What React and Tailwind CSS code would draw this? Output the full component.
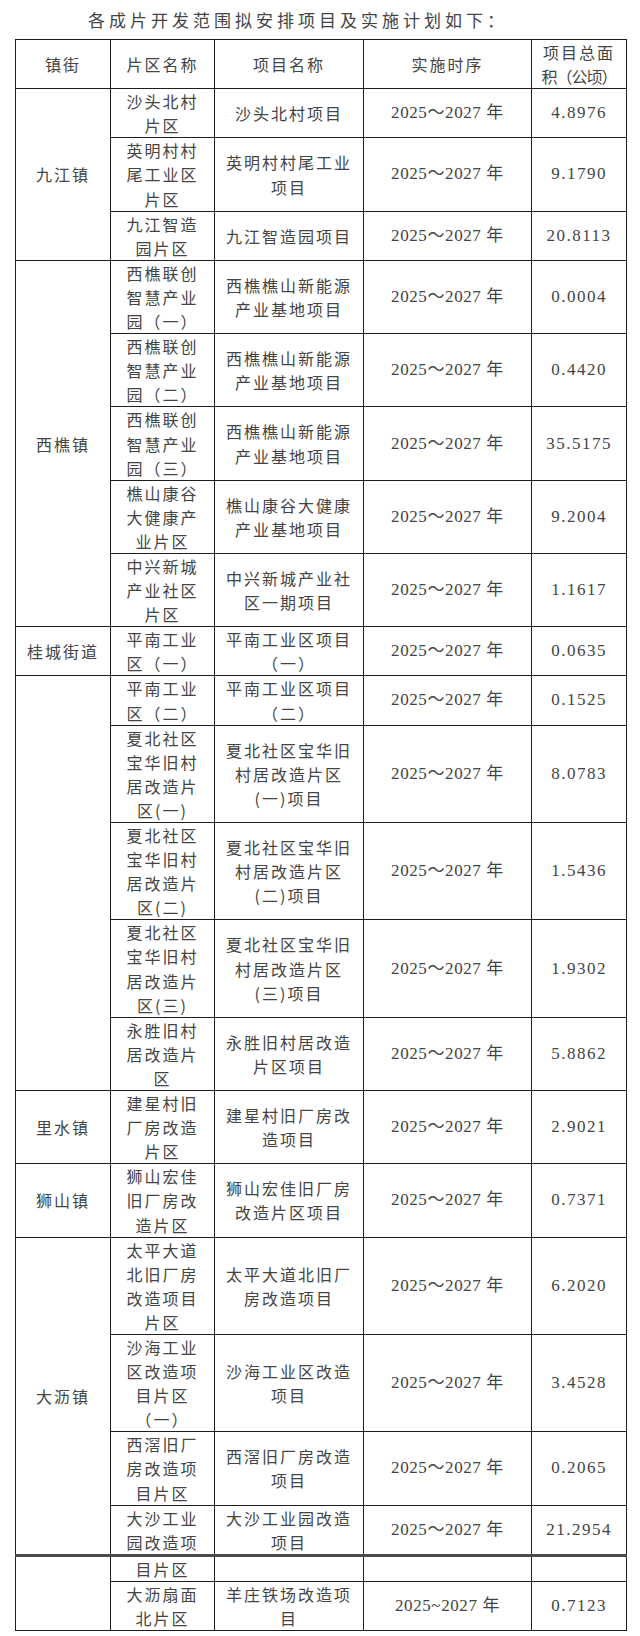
import React from 'react';

const T = '2025～2027 年';

const groups = [
  {
    town: '九江镇',
    rows: [
      { zone: ['沙头北村', '片区'], project: ['沙头北村项目'], time: T, area: '4.8976' },
      { zone: ['英明村村', '尾工业区', '片区'], project: ['英明村村尾工业', '项目'], time: T, area: '9.1790' },
      { zone: ['九江智造', '园片区'], project: ['九江智造园项目'], time: T, area: '20.8113' },
    ],
  },
  {
    town: '西樵镇',
    rows: [
      { zone: ['西樵联创', '智慧产业', '园（一）'], project: ['西樵樵山新能源', '产业基地项目'], time: T, area: '0.0004' },
      { zone: ['西樵联创', '智慧产业', '园（二）'], project: ['西樵樵山新能源', '产业基地项目'], time: T, area: '0.4420' },
      { zone: ['西樵联创', '智慧产业', '园（三）'], project: ['西樵樵山新能源', '产业基地项目'], time: T, area: '35.5175' },
      { zone: ['樵山康谷', '大健康产', '业片区'], project: ['樵山康谷大健康', '产业基地项目'], time: T, area: '9.2004' },
      { zone: ['中兴新城', '产业社区', '片区'], project: ['中兴新城产业社', '区一期项目'], time: T, area: '1.1617' },
    ],
  },
  {
    town: '桂城街道',
    rows: [
      { zone: ['平南工业', '区（一）'], project: ['平南工业区项目', '（一）'], time: T, area: '0.0635' },
    ],
  },
  {
    town: '',
    rows: [
      { zone: ['平南工业', '区（二）'], project: ['平南工业区项目', '（二）'], time: T, area: '0.1525' },
      { zone: ['夏北社区', '宝华旧村', '居改造片', '区(一)'], project: ['夏北社区宝华旧', '村居改造片区', '(一)项目'], time: T, area: '8.0783' },
      { zone: ['夏北社区', '宝华旧村', '居改造片', '区(二)'], project: ['夏北社区宝华旧', '村居改造片区', '(二)项目'], time: T, area: '1.5436' },
      { zone: ['夏北社区', '宝华旧村', '居改造片', '区(三)'], project: ['夏北社区宝华旧', '村居改造片区', '(三)项目'], time: T, area: '1.9302' },
      { zone: ['永胜旧村', '居改造片', '区'], project: ['永胜旧村居改造', '片区项目'], time: T, area: '5.8862' },
    ],
  },
  {
    town: '里水镇',
    rows: [
      { zone: ['建星村旧', '厂房改造', '片区'], project: ['建星村旧厂房改', '造项目'], time: T, area: '2.9021' },
    ],
  },
  {
    town: '狮山镇',
    rows: [
      { zone: ['狮山宏佳', '旧厂房改', '造片区'], project: ['狮山宏佳旧厂房', '改造片区项目'], time: T, area: '0.7371' },
    ],
  },
  {
    town: '大沥镇',
    rows: [
      { zone: ['太平大道', '北旧厂房', '改造项目', '片区'], project: ['太平大道北旧厂', '房改造项目'], time: T, area: '6.2020' },
      { zone: ['沙海工业', '区改造项', '目片区', '（一）'], project: ['沙海工业区改造', '项目'], time: T, area: '3.4528' },
      { zone: ['西滘旧厂', '房改造项', '目片区'], project: ['西滘旧厂房改造', '项目'], time: T, area: '0.2065' },
      { zone: ['大沙工业', '园改造项'], project: ['大沙工业园改造', '项目'], time: T, area: '21.2954' },
    ],
  },
  {
    // continues on the next page
    town: '',
    pageBreak: true,
    rows: [
      { zone: ['目片区'], project: [], time: '', area: '' },
      { zone: ['大沥扇面', '北片区'], project: ['羊庄铁场改造项', '目'], time: '2025~2027 年', area: '0.7123' },
    ],
  },
];

const Lines = ({ lines }) => lines.map((line, i) => <div key={i} className="whitespace-nowrap">{line}</div>);

const cell = 'border border-[#1e1e1e] text-center align-middle leading-[24.1px]';
const cjk = "[font-family:'Noto_Sans_CJK_SC',sans-serif] text-[16px] tracking-[2px]";
const num = "[font-family:'Liberation_Serif','Noto_Sans_CJK_SC',serif] text-[17px]";

export default function App() {
  return (
    <div className="min-h-[1636px] bg-white text-[#444]">
      <p className="pt-2 pl-[88px] leading-6 text-[17px] tracking-[4px] [font-family:'Noto_Sans_CJK_SC',sans-serif]">
        各成片开发范围拟安排项目及实施计划如下：
      </p>
      <table className="mt-[7px] ml-[15px] w-[611px] table-fixed border-collapse">
        <colgroup>
          <col className="w-[95px]" />
          <col className="w-[104px]" />
          <col className="w-[149px]" />
          <col className="w-[168px]" />
          <col className="w-[95px]" />
        </colgroup>
        <thead>
          <tr>
            <th className={`${cell} ${cjk} font-normal`}>镇街</th>
            <th className={`${cell} ${cjk} font-normal`}>片区名称</th>
            <th className={`${cell} ${cjk} font-normal`}>项目名称</th>
            <th className={`${cell} ${cjk} font-normal`}>实施时序</th>
            <th className={`${cell} font-normal [font-family:'Noto_Sans_CJK_SC',sans-serif] text-[16px]`}>
              <div className="tracking-[2px]">项目总面</div>
              <div className="whitespace-nowrap tracking-[-1px]">积（公顷）</div>
            </th>
          </tr>
        </thead>
        <tbody>
          {groups.map((group, gi) =>
            group.rows.map((row, ri) => {
              const top = group.pageBreak && ri === 0 ? 'border-t-[3px] border-t-[#4a4a4a]' : '';
              return (
                <tr key={`${gi}-${ri}`}>
                  {ri === 0 && (
                    <td rowSpan={group.rows.length} className={`${cell} ${cjk} ${top}`}>
                      {group.town}
                    </td>
                  )}
                  <td className={`${cell} ${cjk} ${top}`}>
                    <Lines lines={row.zone} />
                  </td>
                  <td className={`${cell} ${cjk} ${top}`}>
                    <Lines lines={row.project} />
                  </td>
                  <td className={`${cell} ${num} tracking-[0.6px] ${top}`}>{row.time}</td>
                  <td className={`${cell} ${num} tracking-[1.5px] ${top}`}>{row.area}</td>
                </tr>
              );
            })
          )}
        </tbody>
      </table>
    </div>
  );
}
